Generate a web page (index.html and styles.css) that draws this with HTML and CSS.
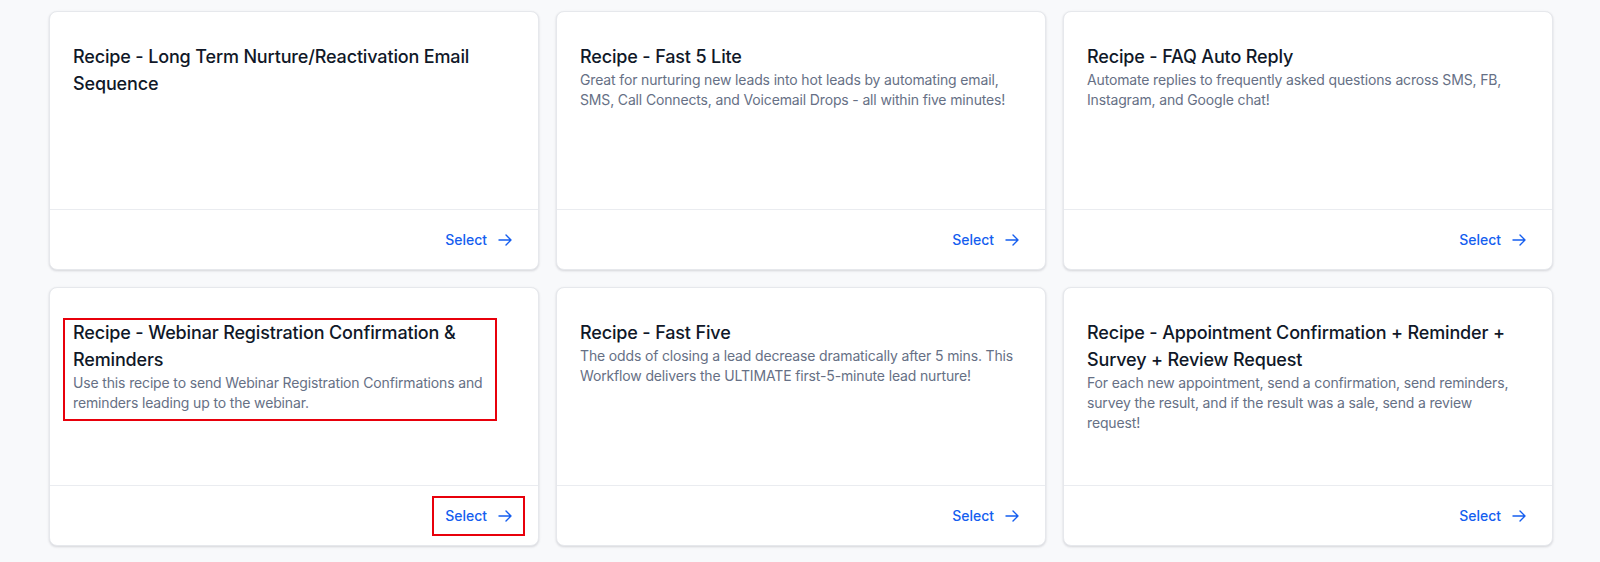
FILE: index.html
```html
<!DOCTYPE html>
<html lang="en">
<head>
<meta charset="utf-8">
<title>Recipes</title>
<link rel="stylesheet" href="styles.css">
</head>
<body>
<main class="grid">
  <div class="card">
    <div class="card-body">
      <h3 class="title">Recipe - Long Term Nurture/Reactivation Email Sequence</h3>
    </div>
    <div class="card-foot"><button class="select">Select <svg class="arrow" viewBox="0 0 16 16" width="16" height="16"><path d="M2 8h12M9 3l5 5-5 5" fill="none" stroke="currentColor" stroke-width="1.4" stroke-linecap="round" stroke-linejoin="round"/></svg></button></div>
  </div>
  <div class="card">
    <div class="card-body">
      <h3 class="title">Recipe - Fast 5 Lite</h3>
      <p class="desc">Great for nurturing new leads into hot leads by automating email, SMS, Call Connects, and Voicemail Drops - all within five minutes!</p>
    </div>
    <div class="card-foot"><button class="select">Select <svg class="arrow" viewBox="0 0 16 16" width="16" height="16"><path d="M2 8h12M9 3l5 5-5 5" fill="none" stroke="currentColor" stroke-width="1.4" stroke-linecap="round" stroke-linejoin="round"/></svg></button></div>
  </div>
  <div class="card">
    <div class="card-body">
      <h3 class="title">Recipe - FAQ Auto Reply</h3>
      <p class="desc">Automate replies to frequently asked questions across SMS, FB, Instagram, and Google chat!</p>
    </div>
    <div class="card-foot"><button class="select">Select <svg class="arrow" viewBox="0 0 16 16" width="16" height="16"><path d="M2 8h12M9 3l5 5-5 5" fill="none" stroke="currentColor" stroke-width="1.4" stroke-linecap="round" stroke-linejoin="round"/></svg></button></div>
  </div>
  <div class="card">
    <span class="mark mark-text"></span>
    <span class="mark mark-btn"></span>
    <div class="card-body">
      <h3 class="title">Recipe - Webinar Registration Confirmation &amp; Reminders</h3>
      <p class="desc">Use this recipe to send Webinar Registration Confirmations and reminders leading up to the webinar.</p>
    </div>
    <div class="card-foot"><button class="select">Select <svg class="arrow" viewBox="0 0 16 16" width="16" height="16"><path d="M2 8h12M9 3l5 5-5 5" fill="none" stroke="currentColor" stroke-width="1.4" stroke-linecap="round" stroke-linejoin="round"/></svg></button></div>
  </div>
  <div class="card">
    <div class="card-body">
      <h3 class="title">Recipe - Fast Five</h3>
      <p class="desc">The odds of closing a lead decrease dramatically after 5 mins. This Workflow delivers the ULTIMATE first-5-minute lead nurture!</p>
    </div>
    <div class="card-foot"><button class="select">Select <svg class="arrow" viewBox="0 0 16 16" width="16" height="16"><path d="M2 8h12M9 3l5 5-5 5" fill="none" stroke="currentColor" stroke-width="1.4" stroke-linecap="round" stroke-linejoin="round"/></svg></button></div>
  </div>
  <div class="card">
    <div class="card-body">
      <h3 class="title">Recipe - Appointment Confirmation + Reminder + Survey + Review Request</h3>
      <p class="desc">For each new appointment, send a confirmation, send reminders, survey the result, and if the result was a sale, send a review request!</p>
    </div>
    <div class="card-foot"><button class="select">Select <svg class="arrow" viewBox="0 0 16 16" width="16" height="16"><path d="M2 8h12M9 3l5 5-5 5" fill="none" stroke="currentColor" stroke-width="1.4" stroke-linecap="round" stroke-linejoin="round"/></svg></button></div>
  </div>
</main>
</body>
</html>
```

FILE: styles.css
```css
* { box-sizing: border-box; }
html, body { margin: 0; padding: 0; }
body {
  background: #f8f9fb;
  font-family: Inter, "Noto Sans", Arial, sans-serif;
  width: 1600px;
  height: 562px;
  overflow: hidden;
}
.grid {
  display: grid;
  grid-template-columns: repeat(3, 490px);
  grid-auto-rows: 259px;
  column-gap: 17px;
  row-gap: 17px;
  padding: 11px 47px 0 49px;
}
.card {
  position: relative;
  background: #fff;
  border: 1px solid #e6e8ec;
  border-radius: 8px;
  box-shadow: 0 1px 3px rgba(16, 24, 40, 0.10), 0 1px 2px rgba(16, 24, 40, 0.06);
  display: flex;
  flex-direction: column;
}
.card-body {
  flex: 1;
  padding: 31px 26px 0 23px;
}
.title {
  margin: 0;
  font-size: 18px;
  line-height: 27px;
  font-weight: 500;
  letter-spacing: -0.15px;
  color: #101828;
}
.desc {
  margin: 0;
  font-size: 14px;
  line-height: 20px;
  letter-spacing: -0.15px;
  color: #667085;
}
.card-foot {
  height: 60px;
  border-top: 1px solid #eaecf0;
  display: flex;
  align-items: center;
  justify-content: flex-end;
  padding: 0 25px 0 24px;
}
.select {
  display: flex;
  align-items: center;
  gap: 10px;
  background: none;
  border: 0;
  padding: 0;
  font-family: inherit;
  font-size: 14px;
  font-weight: 500;
  color: #155eef;
  cursor: pointer;
}
.arrow { display: block; }
.mark {
  position: absolute;
  border: 2px solid #e8000b;
  pointer-events: none;
}
.mark-text { left: 13px; top: 30px; width: 434px; height: 103px; }
.mark-btn { left: 382px; top: 208px; width: 93px; height: 40px; }
```
